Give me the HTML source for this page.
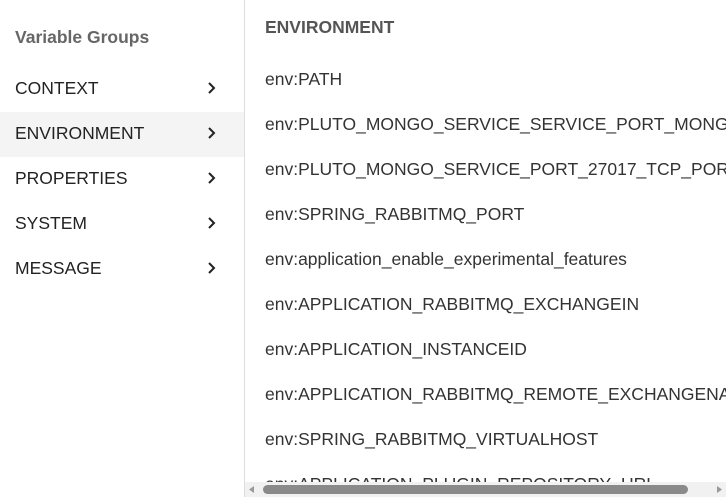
<!DOCTYPE html>
<html><head><style>
body{margin:0;width:726px;height:497px;overflow:hidden;background:#fff;font-family:"Liberation Sans",sans-serif;position:relative}
.side{position:absolute;left:0;top:0;width:244px;height:497px;border-right:1px solid #ddd}
.hd{position:absolute;left:15px;top:27px;font-size:17.5px;font-weight:bold;color:#666}
.it{position:absolute;left:0;width:244px;height:45px;line-height:45px;font-size:17.5px;color:#222}
.it span{position:absolute;left:15px;top:0}
.it svg{position:absolute;left:206px;top:15px}
.sel{background:#f4f4f4}
.main{position:absolute;left:245px;top:0;right:0;bottom:0;overflow:hidden}
.mh{position:absolute;left:20px;top:17px;font-size:17.5px;font-weight:bold;color:#555}
.r{position:absolute;left:20px;font-size:17.5px;color:#333;white-space:nowrap;height:22px;line-height:22px}
.sb{position:absolute;left:245px;top:482px;width:481px;height:15px;background:#f1f1f1}
.th{position:absolute;left:18px;top:3px;width:425px;height:9px;border-radius:5px;background:#8a8a8a}
</style></head><body>
<div class="side">
<div class="hd">Variable Groups</div>
<div class="it" style="top:66px"><span>CONTEXT</span><svg width="12" height="14" viewBox="0 0 12 14"><path d="M3 2l5 5-5 5" stroke="#222" stroke-width="2" fill="none"/></svg></div>
<div class="it sel" style="top:112px"><span style="top:-1px">ENVIRONMENT</span><svg width="12" height="14" viewBox="0 0 12 14" style="top:14px"><path d="M3 2l5 5-5 5" stroke="#222" stroke-width="2" fill="none"/></svg></div>
<div class="it" style="top:156px"><span>PROPERTIES</span><svg width="12" height="14" viewBox="0 0 12 14"><path d="M3 2l5 5-5 5" stroke="#222" stroke-width="2" fill="none"/></svg></div>
<div class="it" style="top:201px"><span>SYSTEM</span><svg width="12" height="14" viewBox="0 0 12 14"><path d="M3 2l5 5-5 5" stroke="#222" stroke-width="2" fill="none"/></svg></div>
<div class="it" style="top:246px"><span>MESSAGE</span><svg width="12" height="14" viewBox="0 0 12 14"><path d="M3 2l5 5-5 5" stroke="#222" stroke-width="2" fill="none"/></svg></div>
</div>
<div class="main">
<div class="mh">ENVIRONMENT</div>
<div class="r" style="top:68px">env:PATH</div>
<div class="r" style="top:113px">env:PLUTO_MONGO_SERVICE_SERVICE_PORT_MONGODB</div>
<div class="r" style="top:158px">env:PLUTO_MONGO_SERVICE_PORT_27017_TCP_PORT</div>
<div class="r" style="top:203px">env:SPRING_RABBITMQ_PORT</div>
<div class="r" style="top:248px">env:application_enable_experimental_features</div>
<div class="r" style="top:293px">env:APPLICATION_RABBITMQ_EXCHANGEIN</div>
<div class="r" style="top:338px">env:APPLICATION_INSTANCEID</div>
<div class="r" style="top:383px">env:APPLICATION_RABBITMQ_REMOTE_EXCHANGENAME</div>
<div class="r" style="top:428px">env:SPRING_RABBITMQ_VIRTUALHOST</div>
<div class="r" style="top:473px">env:APPLICATION_PLUGIN_REPOSITORY_URL</div>
</div>
<div class="sb"><svg style="position:absolute;left:4px;top:4px" width="5" height="7"><path d="M5 0L0 3.5 5 7z" fill="#999"/></svg><div class="th"></div><svg style="position:absolute;right:4px;top:4px" width="5" height="7"><path d="M0 0L5 3.5 0 7z" fill="#999"/></svg></div>
</body></html>
